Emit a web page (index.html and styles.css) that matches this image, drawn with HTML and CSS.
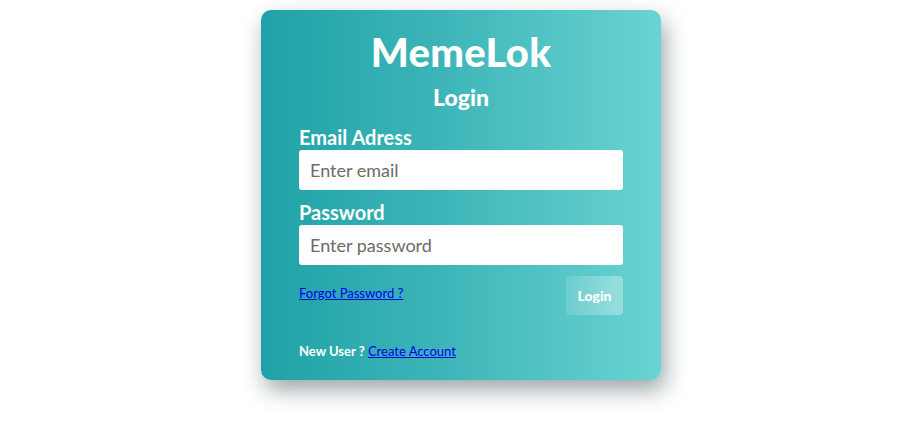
FILE: index.html
```html
<!DOCTYPE html>
<html>
<head>
<meta charset="utf-8">
<link rel="stylesheet" href="styles.css">
</head>
<body>
<div class="page">
  <form class="card">
    <h1 class="brand">MemeLok</h1>
    <h2 class="title">Login</h2>
    <label class="label" for="email">Email Adress</label>
    <input class="input" id="email" type="email" placeholder="Enter email">
    <label class="label label-2" for="pw">Password</label>
    <input class="input" id="pw" type="password" placeholder="Enter password">
    <div class="actions">
      <a class="link" href="#">Forgot Password ?</a>
      <button class="btn" type="button">Login</button>
    </div>
    <p class="signup">New User ? <a class="link" href="#">Create Account</a></p>
  </form>
</div>
</body>
</html>
```
FILE: styles.css
```css
html, body {
  margin: 0;
  padding: 0;
  background: #ffffff;
}
body {
  font-family: "Lato", "Open Sans", sans-serif;
}
.page {
  display: flex;
  justify-content: center;
  padding: 10px 0 56px 21px;
}
.card {
  width: 400px;
  height: 370px;
  box-sizing: border-box;
  padding: 22px 38px 0 38px;
  border-radius: 10px;
  background: linear-gradient(to right, #1fa2a7 0%, #3db5b8 45%, #6ad3d3 100%);
  box-shadow: 4px 10px 22px rgba(30, 60, 60, 0.45);
  display: flex;
  flex-direction: column;
  color: #ffffff;
}
.brand {
  margin: 0;
  text-align: center;
  font-size: 40px;
  line-height: 40px;
  font-weight: 900;
  letter-spacing: 0.3px;
}
.title {
  margin: 12px 0 0 0;
  text-align: center;
  font-size: 23px;
  line-height: 26px;
  font-weight: 900;
}
.label {
  margin-top: 15px;
  font-size: 20px;
  line-height: 24px;
  font-weight: 700;
}
.label-2 {
  margin-top: 10px;
}
.input {
  margin-top: 1px;
  height: 40px;
  box-sizing: border-box;
  border: none;
  border-radius: 3px;
  padding: 0 11px;
  font-family: inherit;
  font-size: 18px;
  color: #555;
  background: #fff;
  outline: none;
}
.input::placeholder {
  color: #6e6a6a;
}
.actions {
  margin-top: 11px;
  display: flex;
  justify-content: space-between;
  align-items: flex-start;
}
.link {
  color: #0000ee;
  font-size: 13px;
  text-decoration: underline;
  margin-top: 9px;
}
.btn {
  width: 57px;
  height: 39px;
  border: none;
  border-radius: 4px;
  background: linear-gradient(to right, rgba(255,255,255,0.12), rgba(255,255,255,0.35));
  color: #ffffff;
  font-family: inherit;
  font-size: 14px;
  font-weight: 900;
  padding: 0;
}
.signup {
  margin: 28px 0 0 0;
  font-size: 13px;
  font-weight: 700;
}
.signup .link {
  font-weight: 400;
  margin: 0;
}
```
